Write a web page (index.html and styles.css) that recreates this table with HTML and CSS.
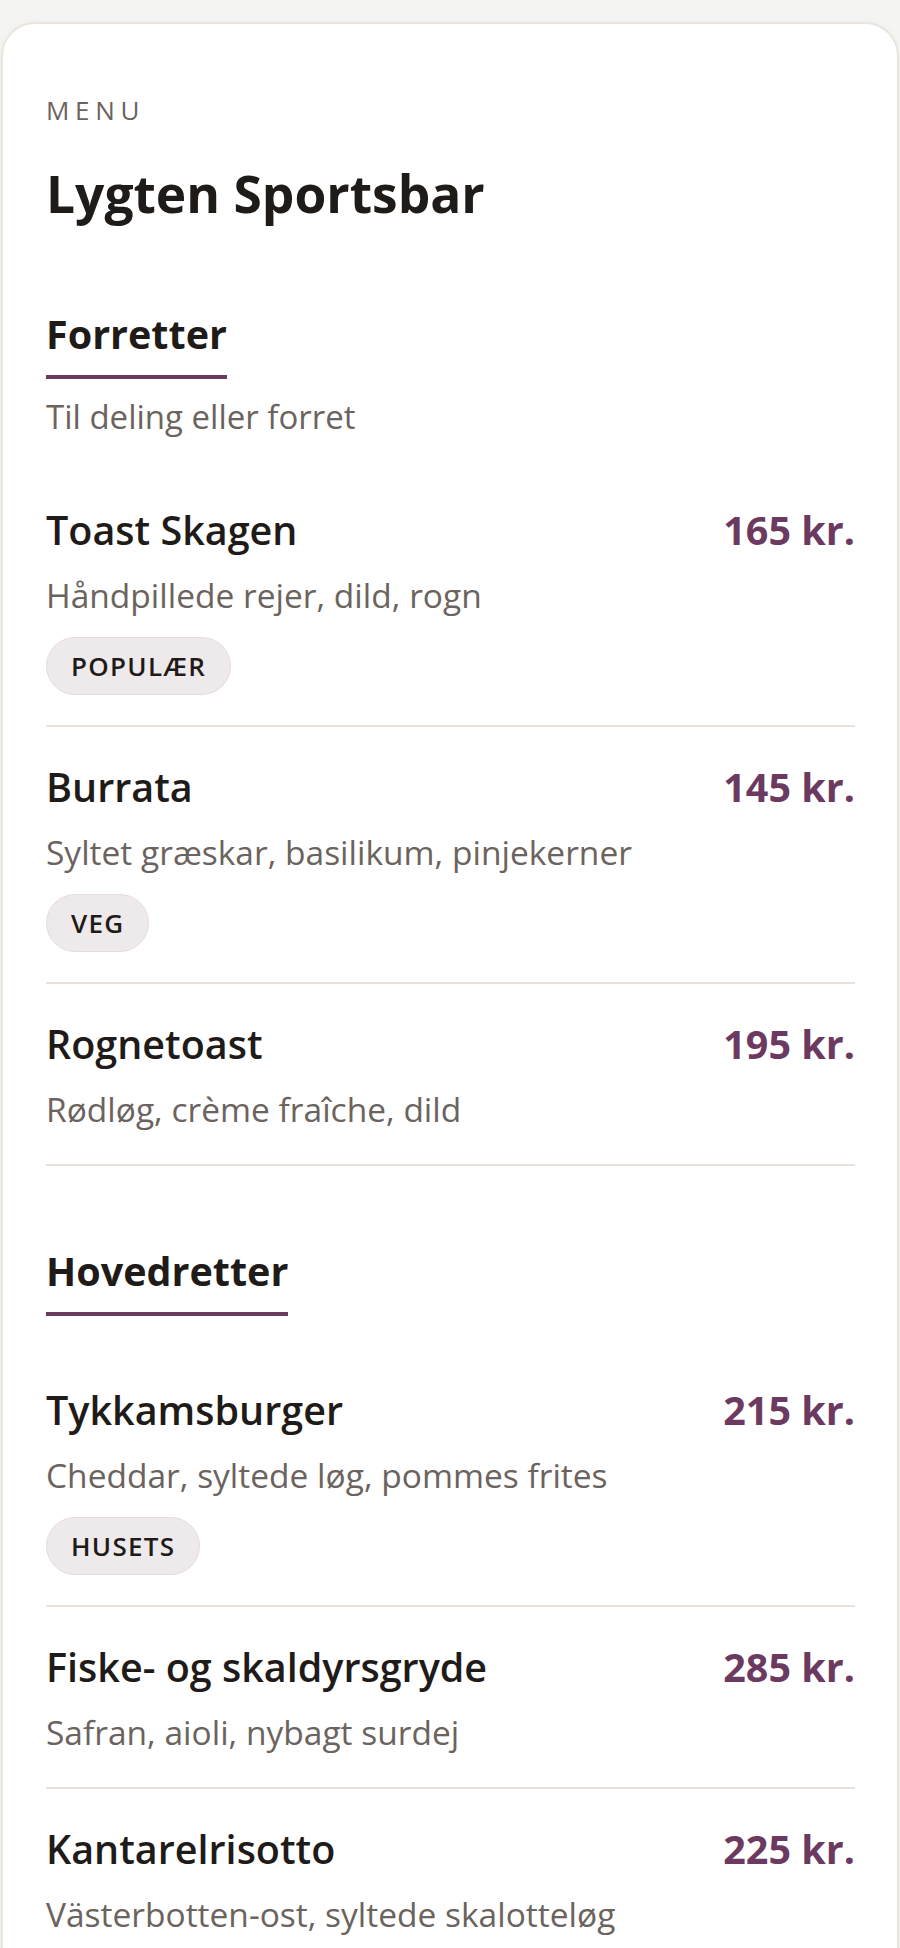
FILE: index.html
```html
<!DOCTYPE html>
<html lang="da">
<head>
<meta charset="utf-8">
<title>Lygten Sportsbar – Menu</title>
<link rel="stylesheet" href="styles.css">
</head>
<body>
<div class="page">
  <main class="card">
    <p class="eyebrow">MENU</p>
    <h1 class="title">Lygten Sportsbar</h1>

    <section class="section">
      <h2 class="section-title">Forretter</h2>
      <p class="section-sub">Til deling eller forret</p>
      <ul class="items">
        <li class="item">
          <div class="item-head"><h3 class="item-name">Toast Skagen</h3><span class="price">165 kr.</span></div>
          <p class="item-desc">Håndpillede rejer, dild, rogn</p>
          <span class="tag">POPULÆR</span>
        </li>
        <li class="item">
          <div class="item-head"><h3 class="item-name">Burrata</h3><span class="price">145 kr.</span></div>
          <p class="item-desc">Syltet græskar, basilikum, pinjekerner</p>
          <span class="tag">VEG</span>
        </li>
        <li class="item">
          <div class="item-head"><h3 class="item-name">Rognetoast</h3><span class="price">195 kr.</span></div>
          <p class="item-desc">Rødløg, crème fraîche, dild</p>
        </li>
      </ul>
    </section>

    <section class="section">
      <h2 class="section-title">Hovedretter</h2>
      <ul class="items">
        <li class="item">
          <div class="item-head"><h3 class="item-name">Tykkamsburger</h3><span class="price">215 kr.</span></div>
          <p class="item-desc">Cheddar, syltede løg, pommes frites</p>
          <span class="tag">HUSETS</span>
        </li>
        <li class="item">
          <div class="item-head"><h3 class="item-name">Fiske- og skaldyrsgryde</h3><span class="price">285 kr.</span></div>
          <p class="item-desc">Safran, aioli, nybagt surdej</p>
        </li>
        <li class="item">
          <div class="item-head"><h3 class="item-name">Kantarelrisotto</h3><span class="price">225 kr.</span></div>
          <p class="item-desc">Västerbotten-ost, syltede skalotteløg</p>
        </li>
      </ul>
    </section>
  </main>
</div>
</body>
</html>
```
FILE: styles.css
```css
* { box-sizing: border-box; }

html, body {
  margin: 0;
  padding: 0;
  background: #f4f4f3;
}

body {
  font-family: "Open Sans", "Noto Sans", sans-serif;
  color: #1f1b18;
}

.page {
  padding: 22px 1px 0;
}

.card {
  background: #ffffff;
  border: 2px solid #ebe4dc;
  border-radius: 34px;
  padding: 68px 42px 80px 43px;
  box-shadow: 0 2px 12px rgba(0, 0, 0, 0.03);
}

.eyebrow {
  margin: 0;
  font-size: 26px;
  line-height: 36px;
  letter-spacing: 0.22em;
  color: #6b635e;
}

.title {
  margin: 33px 0 0;
  font-size: 51.5px;
  line-height: 64px;
  font-weight: 700;
  color: #1f1b18;
}

.section {
  margin-top: 79px;
}

.section:first-of-type {
  margin-top: 83px;
}

.section-title {
  display: inline-block;
  margin: 0;
  font-size: 39.5px;
  line-height: 52px;
  font-weight: 700;
  padding-bottom: 15px;
  border-bottom: 4px solid #6c3a60;
}

.section-sub {
  margin: 19px 0 1px;
  font-size: 33px;
  line-height: 38px;
  color: #6b635e;
}

.items {
  list-style: none;
  margin: 34px 0 0;
  padding: 0;
}

.item {
  padding: 33px 0 30px;
  border-bottom: 2px solid #e9e3dc;
}

.item-head {
  display: flex;
  justify-content: space-between;
  align-items: baseline;
  gap: 24px;
}

.item-name {
  margin: 0;
  font-size: 39.5px;
  line-height: 54px;
  font-weight: 600;
  color: #1f1b18;
}

.price {
  font-size: 39.5px;
  line-height: 54px;
  font-weight: 700;
  color: #6c3a60;
  white-space: nowrap;
}

.item-desc {
  margin: 16px 0 3px;
  font-size: 33.5px;
  line-height: 44px;
  color: #6b635e;
}

.tag {
  display: inline-block;
  margin-top: 17px;
  padding: 12px 24px;
  font-size: 26px;
  line-height: 32px;
  font-weight: 600;
  letter-spacing: 0.05em;
  color: #1f1b18;
  background: #eeeaeb;
  border: 1px solid #e4ded9;
  border-radius: 999px;
}
```
